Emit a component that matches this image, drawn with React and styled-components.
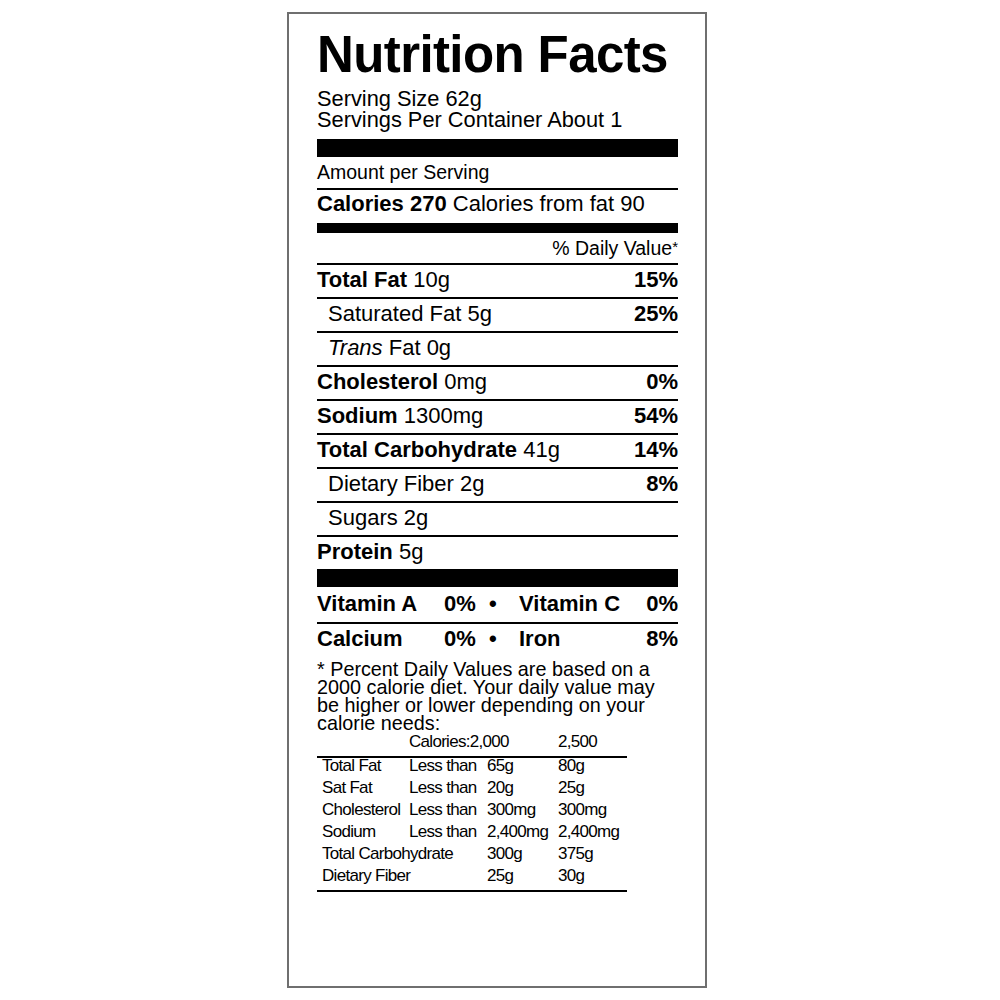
import styled, { createGlobalStyle } from "styled-components"

const GlobalStyle = createGlobalStyle`
    body {
        margin: 0;
        background: #fff;
        font-family: "Liberation Sans", Arial, Helvetica, sans-serif;
        color: #000;
    }
`

const Label = styled.div`
    box-sizing: border-box;
    width: 420px;
    height: 976px;
    margin: 12px 0 0 287px;
    padding: 15px 27px 0 28px;
    border: 2px solid #6f6f6f;
    background: #fff;
`
const Title = styled.h1`
    margin: 0;
    font-size: 51px;
    line-height: 52px;
    font-weight: 700;
    letter-spacing: -0.6px;
    white-space: nowrap;
`
const Serving = styled.div`
    margin-top: 7px;
    font-size: 21.8px;
    line-height: 21px;
`
const Bar = styled.div`
    height: ${p => p.$h}px;
    margin-top: ${p => p.$mt || 0}px;
    background: #000;
`
const SmallRow = styled.div`
    padding: 3px 0 ${p => p.$pb}px;
    font-size: 19.5px;
    line-height: 24px;
    text-align: ${p => p.$right ? 'right' : 'left'};
    border-bottom: 2px solid #000;
`
const Star = styled.span`
    font-size: 15px;
    line-height: 0;
    vertical-align: 3px;
`
const CalRow = styled.div`
    padding: 1px 0 6px;
    font-size: 22px;
    line-height: 26px;
`
const Row = styled.div`
    display: flex;
    justify-content: space-between;
    padding: 0 0 3px ${p => p.$indent ? 11 : 0}px;
    font-size: 22px;
    line-height: 29px;
    border-bottom: ${p => p.$last ? 'none' : '2px solid #000'};
`
const B = styled.b`
    font-weight: 700;
`
const VitRow = styled.div`
    display: grid;
    grid-template-columns: 127px 32px 43px 1fr auto;
    padding: ${p => p.$first ? '2px 0 4px' : '0'};
    font-size: 22px;
    line-height: 29px;
    font-weight: 700;
    border-bottom: ${p => p.$first ? '2px solid #000' : 'none'};
`
const Dot = styled.span`
    padding-left: 13px;
`
const Right = styled.span`
    text-align: right;
`
const Note = styled.p`
    margin: 7px 0 0;
    font-size: 19.8px;
    line-height: 18px;
`
const Table = styled.div`
    width: 310px;
    font-size: 17px;
    letter-spacing: -0.7px;
    white-space: nowrap;
`
const TableGrid = styled.div`
    display: grid;
    grid-template-columns: 87px 78px 71px auto;
    grid-auto-rows: ${p => p.$head ? 'auto' : '22px'};
    padding: ${p => p.$head ? '0 0 4px 5px' : '0 0 0 5px'};
    line-height: ${p => p.$head ? 20 : 16}px;
    border-bottom: 2px solid #000;
`
const Cell = styled.span`
    grid-column: ${p => p.$col} / span ${p => p.$span || 1};
`

const nutrients = [
    { name: 'Total Fat', amount: '10g', pct: '15%' },
    { name: 'Saturated Fat', amount: '5g', pct: '25%', sub: true },
    { name: 'Trans', amount: 'Fat 0g', sub: true, italic: true },
    { name: 'Cholesterol', amount: '0mg', pct: '0%' },
    { name: 'Sodium', amount: '1300mg', pct: '54%' },
    { name: 'Total Carbohydrate', amount: '41g', pct: '14%' },
    { name: 'Dietary Fiber', amount: '2g', pct: '8%', sub: true },
    { name: 'Sugars', amount: '2g', sub: true },
    { name: 'Protein', amount: '5g' },
]

const limits = [
    ['Total Fat', 'Less than', '65g', '80g'],
    ['Sat Fat', 'Less than', '20g', '25g'],
    ['Cholesterol', 'Less than', '300mg', '300mg'],
    ['Sodium', 'Less than', '2,400mg', '2,400mg'],
    ['Total Carbohydrate', null, '300g', '375g'],
    ['Dietary Fiber', null, '25g', '30g'],
]

const NutrientName = ({ n }) => {
    if (n.italic) return <span><i>{n.name}</i> {n.amount}</span>
    if (n.sub) return <span>{n.name} {n.amount}</span>
    return <span><B>{n.name}</B> {n.amount}</span>
}

const App = () => {
    return (
        <>
            <GlobalStyle />
            <Label>
                <Title>Nutrition Facts</Title>
                <Serving>
                    Serving Size 62g<br />
                    Servings Per Container About 1
                </Serving>
                <Bar $h={18} $mt={9} />
                <SmallRow $pb={4}>Amount per Serving</SmallRow>
                <CalRow><B>Calories 270</B> Calories from fat 90</CalRow>
                <Bar $h={10} />
                <SmallRow $pb={3} $right>% Daily Value<Star>*</Star></SmallRow>
                {nutrients.map((n, i) => (
                    <Row key={n.name} $indent={n.sub} $last={i === nutrients.length - 1}>
                        <NutrientName n={n} />
                        {n.pct ? <B>{n.pct}</B> : null}
                    </Row>
                ))}
                <Bar $h={18} />
                <VitRow $first>
                    <span>Vitamin A</span>
                    <span>0%</span>
                    <Dot>•</Dot>
                    <span>Vitamin C</span>
                    <Right>0%</Right>
                </VitRow>
                <VitRow>
                    <span>Calcium</span>
                    <span>0%</span>
                    <Dot>•</Dot>
                    <span>Iron</span>
                    <Right>8%</Right>
                </VitRow>
                <Note>
                    * Percent Daily Values are based on a 2000 calorie diet. Your daily value may be higher or lower depending on your calorie needs:
                </Note>
                <Table>
                    <TableGrid $head>
                        <Cell $col={2} $span={2}>Calories:2,000</Cell>
                        <Cell $col={4}>2,500</Cell>
                    </TableGrid>
                    <TableGrid>
                        {limits.map(l => (
                            <>
                                <Cell key={l[0]} $col={1} $span={l[1] ? 1 : 2}>{l[0]}</Cell>
                                {l[1] ? <Cell $col={2}>{l[1]}</Cell> : null}
                                <Cell $col={3}>{l[2]}</Cell>
                                <Cell $col={4}>{l[3]}</Cell>
                            </>
                        ))}
                    </TableGrid>
                </Table>
            </Label>
        </>
    )
}

export default App
